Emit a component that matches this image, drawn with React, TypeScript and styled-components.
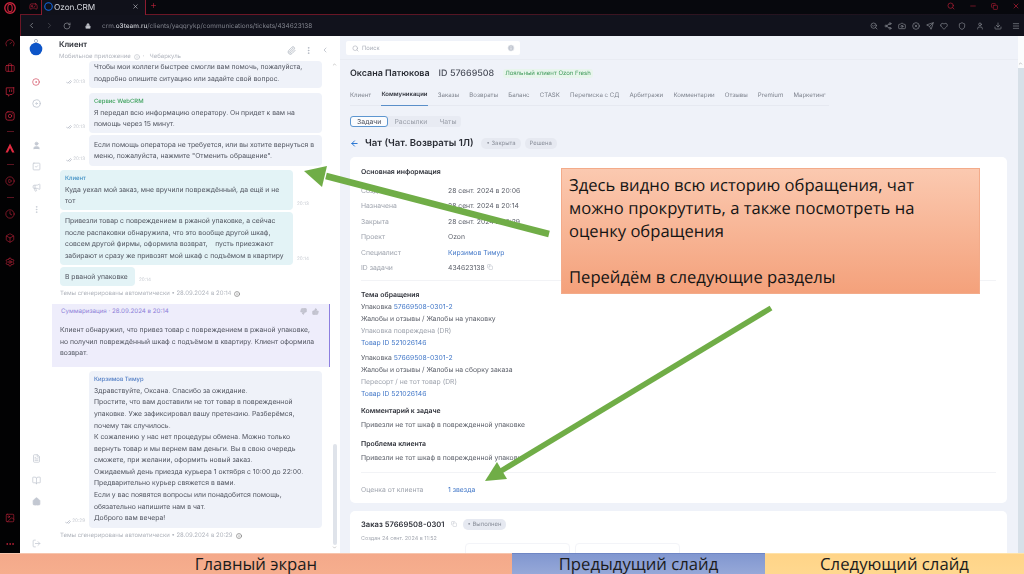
import React from "react";
import styled, { createGlobalStyle } from "styled-components";
import {
  Gauge, Briefcase, Twitch, Instagram, CirclePlay, Clock, Box, Settings, Image as ImageIcon, MoreHorizontal,
  Circle, CircleDot, Disc, User, SquareCheck, Megaphone, MoreVertical, FileText, BookOpen, Home, LogOut,
  ChevronLeft, ChevronRight, RotateCw, Lock, Paperclip, Search, Info, Copy, ThumbsUp, ThumbsDown, CheckCheck,
  ArrowLeft, X, Plus, Minus, SearchCheck, Send, Heart, Camera, Share2, CircleX, Download, Menu, Shield, Gamepad2, ChevronUp, ChevronDown
} from "lucide-react";

const Global = createGlobalStyle`
  html, body { margin: 0; padding: 0; background: #000; }
  body { width: 1024px; height: 574px; overflow: hidden; font-family: Inter, "Noto Sans", sans-serif; text-rendering: geometricPrecision; }
  * { box-sizing: border-box; }
`;

const Page = styled.div`
  position: relative; width: 1024px; height: 574px; display: grid; grid-template-rows: 553px 21px; overflow: hidden;
`;
const Browser = styled.div`display: flex; min-height: 0; filter: blur(0.35px);`;
const SideBar = styled.nav`
  width: 20px; background: #020203; display: flex; flex-direction: column; align-items: center; color: #c8243c; flex: none;
`;
const SideIcon = styled.div<{ $top: number }>`
  margin-top: ${p => p.$top}px; height: 10px; display: flex; align-items: center; justify-content: center;
`;
const SideRule = styled.div<{ $top: number }>`
  margin-top: ${p => p.$top}px; width: 7px; height: 1px; background: #5a1420;
`;
const Main = styled.div`flex: 1; min-width: 0; display: flex; flex-direction: column;`;
const TabBar = styled.div`
  height: 14px; background: #07080d; display: flex; align-items: flex-start; color: #c8243c; position: relative; padding-left: 9px;
`;
const TabSlot = styled.div`width: 12px; height: 12px; display: flex; align-items: center;`;
const ActiveTab = styled.div`
  width: 105px; height: 15px; background: #10111a; border: 1px solid #8d1c30; border-bottom: 0; border-top: 0; display: flex; align-items: center;
  padding: 0 6px 2px 2px; gap: 1px; color: #d8dae0; font-size: 8.2px; z-index: 1;
`;
const TabClose = styled.span`margin-left: auto; display: flex; color: #c9ccd4;`;
const TabPlus = styled.span`margin: 0 0 0 4px; height: 11px; display: flex; align-items: center;`;
const WinControls = styled.div`margin-left: auto; display: flex; align-items: center; gap: 14px; height: 12px; padding-right: 4px; color: #a01c30;`;
const AddressBar = styled.div`
  height: 22px; background: #11121c; border-left: 1px solid #521522; display: flex; align-items: center; color: #8f9198; padding: 0 0 0 6px; position: relative;
  border-top: 1px solid;
  border-image: linear-gradient(90deg, #6b1626 0, #6b1626 30%, #2a1420 70%, #11121c 100%) 1;
`;
const NavGroup = styled.div`display: flex; align-items: center; gap: 9px; margin-right: 14px;`;
const Url = styled.div`font-size: 6.45px; color: #7f818b; margin-left: 11px; white-space: nowrap; b { color: #c7c9cf; font-weight: 500; }`;
const Tools = styled.div`margin-left: auto; display: flex; gap: 6px; align-items: center; padding-right: 4px; color: #8a8c94;`;
const ToolGap = styled.span`width: 4px; margin: 0 -3px;`;
const Content = styled.div`flex: 1; min-height: 0; display: flex;`;

const ChatPanel = styled.section`width: 320px; flex: none; background: #fff; display: flex;`;
const Rail = styled.div`width: 32px; flex: none; display: flex; flex-direction: column; align-items: center; color: #c3c8d2;`;
const RailItem = styled.div<{ $top: number; $color?: string }>`
  margin-top: ${p => p.$top}px; height: 12px; display: flex; align-items: center; justify-content: center; color: ${p => p.$color || "inherit"};
`;
const ChatCol = styled.div`flex: 1; min-width: 0; display: flex; flex-direction: column; position: relative;`;
const ChatHead = styled.header`height: 25px; flex: none; display: flex; align-items: center; padding: 3px 8px 0 7px;`;
const HeadText = styled.div`flex: 1;`;
const HeadTitle = styled.div`font-size: 7.8px; font-weight: 600; color: #2d3038; line-height: 11px;`;
const HeadSub = styled.div`font-size: 6px; color: #b1b5be; line-height: 9px; margin-top: 2px; display: flex; align-items: center; gap: 3px;`;
const HeadTools = styled.div`display: flex; align-items: center; gap: 8px; color: #aab0bb; padding-right: 3px;`;
const Scroll = styled.div`flex: 1; min-height: 0; overflow: hidden; display: flex; flex-direction: column; padding-right: 10px;`;
const Row = styled.div<{ $mt?: number; $client?: boolean }>`
  display: flex; align-items: flex-end; margin-top: ${p => p.$mt ?? 0}px; flex: none;
  padding-left: ${p => (p.$client ? 8 : 0)}px;
`;
const StampLeft = styled.div`
  width: 37px; flex: none; font-size: 4.6px; color: #c5c9d0; display: flex; align-items: center; justify-content: flex-end; padding: 0 4px 3px 0; gap: 1px;
`;
const StampRight = styled.div`font-size: 4.6px; color: #c5c9d0; padding: 0 0 3px 4px; white-space: nowrap;`;
const Bubble = styled.div<{ $tone: "op" | "client"; $width?: number; $pad?: string }>`
  width: ${p => p.$width ?? 233}px; flex: none; border-radius: 4px;
  background: ${p => (p.$tone === "op" ? "#eff2f9" : "#e3f3f6")};
  padding: ${p => p.$pad ?? "3.5px 5px"};
  font-size: 6.8px; line-height: 11.6px; color: #50545f;
`;
const Sender = styled.div<{ $color: string }>`font-size: 5.9px; font-weight: 500; color: ${p => p.$color}; line-height: 10px;`;
const Note = styled.div<{ $mt: number }>`
  margin: ${p => p.$mt}px 0 0 8px; font-size: 6px; color: #b0b4bc; display: flex; align-items: center; gap: 3px; line-height: 8px; flex: none;
  svg { color: #555; }
`;
const Summary = styled.div`
  margin: 6px -10px 0 0; width: 278px; height: 63px; background: #eeedfb; border-right: 1.5px solid #8d7fe0; padding: 3px 10px 0 8px; flex: none;
`;
const SumHead = styled.div`display: flex; align-items: center; height: 10px; font-size: 6.2px; color: #8d7fd8; padding: 0 0 0 1px; justify-content: space-between;`;
const SumIcons = styled.div`display: flex; gap: 5px; color: #bdbdca;`;
const SumText = styled.div`font-size: 6.8px; line-height: 11.6px; color: #50545f; margin-top: 7.2px;`;
const ChatBar = styled.div`
  position: absolute; right: 3px; top: 26px; bottom: 3px; width: 5px; display: flex; flex-direction: column; align-items: center; color: #888;
`;
const ChatThumb = styled.div`width: 4px; height: 101px; background: #dfe3ea; margin-top: 377px; border-radius: 2px; margin-bottom: auto;`;

const Details = styled.section`flex: 1; min-width: 0; background: #eff2f9; display: flex; position: relative; overflow: hidden;`;
const DetailCol = styled.div`flex: 1; min-width: 0; display: flex; flex-direction: column;`;
const SearchRow = styled.div`height: 24px; flex: none; padding: 5px 0 0 6px; border-bottom: 1px solid #e9ecf3;`;
const SearchBox = styled.div`
  width: 174px; height: 14px; background: #fff; border-radius: 2px; display: flex; align-items: center; gap: 3px; padding: 0 5px 0 6px; color: #a8adb7; font-size: 5.8px;
  span:last-child { margin-left: auto; display: flex; }
`;
const Body = styled.div`flex: 1; min-height: 0; padding: 8px 11px 0 10px; display: flex; flex-direction: column;`;
const NameRow = styled.div`display: flex; align-items: center; height: 12px; gap: 9px;`;
const Name = styled.h1`margin: 0; font-size: 8.95px; font-weight: 600; color: #2a2d35; white-space: nowrap;`;
const ClientId = styled.span`font-size: 8.95px; font-weight: 500; color: #4a4e5a; white-space: nowrap;`;
const Loyal = styled.span`font-size: 6px; color: #3f9a5a; background: #e8f5ec; padding: 1px 2px; border-radius: 3px; white-space: nowrap;`;
const Tabs = styled.div`display: flex; width: 479px; height: 19px; margin-top: 8px; gap: 10.2px; font-size: 6.1px; color: #7e838e; border-bottom: 1px solid #e6e9f1; align-items: stretch;`;
const TabItem = styled.div<{ $on?: boolean }>`
  display: flex; align-items: center; height: 19px; padding-bottom: 3px; white-space: nowrap;
  font-weight: ${p => (p.$on ? 600 : 400)}; color: ${p => (p.$on ? "#33363f" : "#7e838e")};
  border-bottom: ${p => (p.$on ? "1.5px solid #5a8fc9" : "0")};
  font-size: ${p => (p.$on ? "6px" : "inherit")};
`;
const SubTabs = styled.div`display: flex; width: 111px; height: 15px; margin-top: 10px; background: #e8ebf3; border-radius: 3px; font-size: 6.9px; color: #9a9fa9;`;
const SubTab = styled.div<{ $on?: boolean }>`
  display: flex; align-items: center; padding: 0 6px; white-space: nowrap; border-radius: 3px;
  ${p => (p.$on ? "background:#fbfcfe;border:1px solid #5d96d0;color:#4a4e5a;" : "")}
`;
const TitleRow = styled.div`display: flex; align-items: center; height: 14px; margin-top: 11px; gap: 4px; color: #1f6fd0;`;
const Title = styled.h2`margin: 0 4px 0 2px; font-size: 9.6px; font-weight: 600; color: #2a2d35; white-space: nowrap;`;
const Chip = styled.span`font-size: 5.9px; color: #8a8f9a; background: #e6e9f1; padding: 2px 5px; border-radius: 5px; white-space: nowrap;`;
const Card = styled.div<{ $mt: number; $h?: number }>`
  flex: none; margin-top: ${p => p.$mt}px; height: ${p => (p.$h ? p.$h + "px" : "auto")}; background: #fff; border-radius: 5px; padding: 9px 11px 0;
`;
const MainCard = styled(Card)`padding-top: 10px;`;
const Heading = styled.h3<{ $mt?: number }>`margin: ${p => p.$mt ?? 0}px 0 0; font-size: 6.9px; line-height: 10px; font-weight: 600; color: #30333b;`;
const Info2 = styled.div`display: grid; grid-template-columns: 87px 1fr; margin-top: 6px; font-size: 6.8px; line-height: 15.4px; color: #5a5e68;`;
const Label = styled.div`color: #9ea3ad;`;
const Rule = styled.div<{ $mt: number }>`height: 1px; background: #f2f3f6; margin-top: ${p => p.$mt}px;`;
const Lines = styled.div<{ $mt?: number }>`margin-top: ${p => p.$mt ?? 0}px; font-size: 6.8px; line-height: 11.9px; color: #595d67;`;
const Link = styled.span`color: #4378c8;`;
const Muted = styled.span`color: #9ea3ad;`;
const Rate = styled.div`display: grid; grid-template-columns: 87px 1fr; margin-top: 12px; font-size: 6.8px; line-height: 10px; color: #9ea3ad;`;
const OrderRow = styled.div`display: flex; align-items: center; gap: 6px; height: 10px; margin-top: -1px; color: #c3c7cf;`;
const OrderTitle = styled.div`font-size: 7.6px; font-weight: 600; color: #30333b; white-space: nowrap;`;
const OrderDate = styled.div`font-size: 5.4px; color: #a5a9b2; margin-top: 6px; line-height: 8px;`;
const Mini = styled.div`display: flex; gap: 5px; margin: 0 0 0 104px;`;
const MiniBox = styled.div<{ $w: number }>`width: ${p => p.$w}px; height: 20px; border: 1px solid #f3f4f8; border-radius: 4px;`;
const PageBar = styled.div`width: 6px; flex: none; background: #fbfcfd; display: flex; flex-direction: column; padding-top: 25px; color: #777;`;
const PageThumb = styled.div`flex: 1; background: #d7e0e8; margin-top: 2px;`;

const Callout = styled.aside`
  position: absolute; left: 561px; top: 168px; width: 419px; height: 126px; padding: 4px 7px;
  background: linear-gradient(#fbc9b0, #f4a17b); border: 1px solid #f3ab8a;
  font-family: "Open Sans", "Noto Sans", sans-serif; font-size: 16.6px; line-height: 23px; color: #141414;
`;
const Arrows = styled.svg`position: absolute; left: 0; top: 0; width: 1024px; height: 574px; pointer-events: none;`;
const Footer = styled.footer`display: grid; grid-template-columns: 512px 253px 259px; height: 21px; overflow: hidden;`;
const FootButton = styled.div<{ $bg: string; $edge: string }>`
  background: ${p => p.$bg}; border-top: 1px solid ${p => p.$edge}; text-align: center;
  font-family: "Open Sans", "Noto Sans", sans-serif; font-size: 16.7px; line-height: 20px; color: #1c1c1c; white-space: nowrap;
`;

const LeftStamp = ({ t }: { t: string }) => (
  <StampLeft><CheckCheck size={6} color="#8b93a5" />{t}</StampLeft>
);

const Ornament = () => (
  <svg width="14" height="18" viewBox="0 0 14 18">
    <circle cx="7" cy="3" r="1.6" fill="none" stroke="#9aa3b5" strokeWidth=".8" />
    <circle cx="7" cy="11" r="6.3" fill="#0d55c8" />
  </svg>
);

const OperaMark = () => (
  <svg width="12" height="12" viewBox="0 0 12 12">
    <circle cx="6" cy="6" r="5.2" fill="none" stroke="#c8243c" strokeWidth="1.4" />
    <ellipse cx="6" cy="6" rx="2.2" ry="3.8" fill="none" stroke="#c8243c" strokeWidth="1.1" />
  </svg>
);

const App = () => (
  <Page>
    <Global />
    <Browser>
      <SideBar>
        <SideIcon $top={3}><OperaMark /></SideIcon>
        <SideIcon $top={25}><Gauge size={10} strokeWidth={1.4} /></SideIcon>
        <SideIcon $top={15}><Briefcase size={10} strokeWidth={1.6} /></SideIcon>
        <SideIcon $top={14}><Twitch size={10} strokeWidth={1.8} /></SideIcon>
        <SideIcon $top={14}><Instagram size={10} strokeWidth={1.8} /></SideIcon>
        <SideRule $top={10} />
        <SideIcon $top={11}>
          <svg width="10" height="10" viewBox="0 0 10 10"><path d="M5 .5 9.5 9.5H7.2L5 5 2.8 9.5H.5Z" fill="#e02a40" /></svg>
        </SideIcon>
        <SideRule $top={11} />
        <SideIcon $top={11}><CirclePlay size={10} strokeWidth={1.4} /></SideIcon>
        <SideRule $top={11} />
        <SideIcon $top={11}><Clock size={10} strokeWidth={1.4} /></SideIcon>
        <SideIcon $top={14}><Box size={10} strokeWidth={1.4} /></SideIcon>
        <SideIcon $top={14}><Settings size={10} strokeWidth={1.6} /></SideIcon>
        <SideIcon $top={246}><ImageIcon size={10} strokeWidth={1.4} /></SideIcon>
        <SideIcon $top={16}><MoreHorizontal size={10} strokeWidth={2} /></SideIcon>
      </SideBar>
      <Main>
        <TabBar>
          <TabSlot><Gamepad2 size={9} strokeWidth={1.6} /></TabSlot>
          <ActiveTab>
            <Circle size={9} color="#1266e0" strokeWidth={3} />Ozon.CRM
            <TabClose><X size={7} /></TabClose>
          </ActiveTab>
          <TabPlus><Plus size={7} /></TabPlus>
          <WinControls>
            <Search size={8} strokeWidth={2.4} />
            <Minus size={8} />
            <Copy size={7} strokeWidth={2.4} />
            <X size={8} strokeWidth={2.4} />
          </WinControls>
        </TabBar>
        <AddressBar>
          <NavGroup>
            <ChevronLeft size={9} />
            <ChevronRight size={9} color="#4a4b53" />
            <RotateCw size={8} />
          </NavGroup>
          <Lock size={6} fill="#c7c9cf" />
          <Url>crm.<b>o3team.ru</b>/clients/yaqqrykp/communications/tickets/434623138</Url>
          <Tools>
            <SearchCheck size={8} />
            <Share2 size={8} />
            <Camera size={8} />
            <CircleX size={8} />
            <Send size={8} />
            <Heart size={8} />
            <ToolGap />
            <Shield size={8} />
            <ToolGap />
            <User size={8} />
            <ToolGap />
            <Download size={8} />
            <ToolGap />
            <Menu size={8} />
          </Tools>
        </AddressBar>
        <Content>
          <ChatPanel>
            <Rail>
              <RailItem $top={5}><Ornament /></RailItem>
              <RailItem $top={23} $color="#d2455a"><CircleDot size={8} strokeWidth={2} /></RailItem>
              <RailItem $top={9}><Disc size={9} strokeWidth={2.4} /></RailItem>
              <RailItem $top={30}><User size={9} fill="#c3c8d2" /></RailItem>
              <RailItem $top={9}><SquareCheck size={9} /></RailItem>
              <RailItem $top={9}><Megaphone size={9} /></RailItem>
              <RailItem $top={10}><MoreVertical size={9} /></RailItem>
              <RailItem $top={237}><FileText size={9} /></RailItem>
              <RailItem $top={10}><BookOpen size={9} /></RailItem>
              <RailItem $top={9}><Home size={9} fill="#c3c8d2" /></RailItem>
              <RailItem $top={30}><LogOut size={9} /></RailItem>
            </Rail>
            <ChatCol>
              <ChatHead>
                <HeadText>
                  <HeadTitle>Клиент</HeadTitle>
                  <HeadSub>Мобильное приложение <Info size={6} /> · &nbsp;&nbsp;Чебаркуль</HeadSub>
                </HeadText>
                <HeadTools>
                  <Paperclip size={9} />
                  <MoreVertical size={9} />
                  <ChevronLeft size={8} />
                </HeadTools>
              </ChatHead>
              <Scroll>
                <Row>
                  <LeftStamp t="20:13" />
                  <Bubble $tone="op" $pad="0 5px 4px">Чтобы мои коллеги быстрее смогли вам помочь, пожалуйста, подробно опишите ситуацию или задайте свой вопрос.</Bubble>
                </Row>
                <Row $mt={5}>
                  <LeftStamp t="20:13" />
                  <Bubble $tone="op">
                    <Sender $color="#3aa05a">Сервис WebCRM</Sender>
                    Я передал всю информацию оператору. Он придет к вам на помощь через 15 минут.
                  </Bubble>
                </Row>
                <Row $mt={2}>
                  <LeftStamp t="20:13" />
                  <Bubble $tone="op">Если помощь оператора не требуется, или вы хотите вернуться в меню, пожалуйста, нажмите "Отменить обращение".</Bubble>
                </Row>
                <Row $mt={4} $client>
                  <Bubble $tone="client" $pad="4px 5px 3px 5px">
                    <Sender $color="#3f8fc4">Клиент</Sender>
                    Куда уехал мой заказ, мне вручили повреждённый, да ещё и не тот
                  </Bubble>
                  <StampRight>20:13</StampRight>
                </Row>
                <Row $mt={2} $client>
                  <Bubble $tone="client">Привезли товар с повреждением в ржаной упаковке, а сейчас после распаковки обнаружила, что это вообще другой шкаф, совсем другой фирмы, оформила возврат, &nbsp;&nbsp;&nbsp;пусть приезжают забирают и сразу же привозят мой шкаф с подъёмом в квартиру</Bubble>
                  <StampRight>20:14</StampRight>
                </Row>
                <Row $mt={2} $client>
                  <Bubble $tone="client" $width={75} $pad="3.5px 5px 4px">В рваной упаковке</Bubble>
                  <StampRight>20:14</StampRight>
                </Row>
                <Note $mt={3.5}>Темы сгенерированы автоматически • 28.09.2024 в 20:14 <Info size={6} /></Note>
                <Summary>
                  <SumHead>
                    <span>Суммаризация · 28.09.2024 в 20:14</span>
                    <SumIcons><ThumbsDown size={7} fill="#c5c6d2" /><ThumbsUp size={7} fill="#c5c6d2" /></SumIcons>
                  </SumHead>
                  <SumText>Клиент обнаружил, что привез товар с повреждением в ржаной упаковке, но получил повреждённый шкаф с подъёмом в квартиру. Клиент оформила возврат.</SumText>
                </Summary>
                <Row $mt={4}>
                  <LeftStamp t="20:29" />
                  <Bubble $tone="op" $pad="4px 5px 3.8px">
                    <Sender $color="#4f7cc4">Кирзимов Тимур</Sender>
                    Здравствуйте, Оксана. Спасибо за ожидание.<br />Простите, что вам доставили не тот товар в поврежденной упаковке. Уже зафиксировал вашу претензию. Разберёмся, почему так случилось.<br />К сожалению у нас нет процедуры обмена. Можно только вернуть товар и мы вернем вам деньги. Вы в свою очередь сможете, при желании, оформить новый заказ.<br />Ожидаемый день приезда курьера 1 октября с 10:00 до 22:00.<br />Предварительно курьер свяжется в вами.<br />Если у вас появятся вопросы или понадобится помощь, обязательно напишите нам в чат.<br />Доброго вам вечера!
                  </Bubble>
                </Row>
                <Note $mt={4}>Темы сгенерированы автоматически • 28.09.2024 в 20:29 <Info size={6} /></Note>
              </Scroll>
              <ChatBar>
                <ChevronUp size={5} />
                <ChatThumb />
                <ChevronDown size={5} />
              </ChatBar>
            </ChatCol>
          </ChatPanel>
          <Details>
            <DetailCol>
              <SearchRow>
                <SearchBox><Search size={7} />Поиск<span><Info size={8} fill="#c3c8d2" color="#fff" /></span></SearchBox>
              </SearchRow>
              <Body>
                <NameRow>
                  <Name>Оксана Патюкова</Name>
                  <ClientId>ID 57669508</ClientId>
                  <Loyal>Лояльный клиент Ozon Fresh</Loyal>
                </NameRow>
                <Tabs>
                  <TabItem>Клиент</TabItem>
                  <TabItem $on>Коммуникации</TabItem>
                  <TabItem>Заказы</TabItem>
                  <TabItem>Возвраты</TabItem>
                  <TabItem>Баланс</TabItem>
                  <TabItem>CTASK</TabItem>
                  <TabItem>Переписка с СД</TabItem>
                  <TabItem>Арбитражи</TabItem>
                  <TabItem>Комментарии</TabItem>
                  <TabItem>Отзывы</TabItem>
                  <TabItem>Premium</TabItem>
                  <TabItem>Маркетинг</TabItem>
                </Tabs>
                <SubTabs>
                  <SubTab $on>Задачи</SubTab>
                  <SubTab>Рассылки</SubTab>
                  <SubTab>Чаты</SubTab>
                </SubTabs>
                <TitleRow>
                  <ArrowLeft size={9} strokeWidth={2.5} />
                  <Title>Чат (Чат. Возвраты 1Л)</Title>
                  <Chip>• Закрыта</Chip>
                  <Chip>Решена</Chip>
                </TitleRow>
                <MainCard $mt={8} $h={346}>
                  <Heading>Основная информация</Heading>
                  <Info2>
                    <Label>Создана</Label><div>28 сент. 2024 в 20:06</div>
                    <Label>Назначена</Label><div>28 сент. 2024 в 20:14</div>
                    <Label>Закрыта</Label><div>28 сент. 2024 в 20:29</div>
                    <Label>Проект</Label><div>Ozon</div>
                    <Label>Специалист</Label><Link>Кирзимов Тимур</Link>
                    <Label>ID задачи</Label><div>434623138 <Copy size={6} color="#b5bac4" /></div>
                  </Info2>
                  <Rule $mt={5} />
                  <Heading $mt={9}>Тема обращения</Heading>
                  <Lines $mt={1}>
                    Упаковка <Link>57669508-0301-2</Link><br />
                    Жалобы и отзывы / Жалобы на упаковку<br />
                    <Muted>Упаковка повреждена (DR)</Muted><br />
                    <Link>Товар ID 521026146</Link>
                  </Lines>
                  <Lines $mt={3}>
                    Упаковка <Link>57669508-0301-2</Link><br />
                    Жалобы и отзывы / Жалобы на сборку заказа<br />
                    <Muted>Пересорт / не тот товар (DR)</Muted><br />
                    <Link>Товар ID 521026146</Link>
                  </Lines>
                  <Heading $mt={6}>Комментарий к задаче</Heading>
                  <Lines $mt={3}>Привезли не тот шкаф в поврежденной упаковке</Lines>
                  <Heading $mt={8}>Проблема клиента</Heading>
                  <Lines $mt={3}>Привезли не тот шкаф в поврежденной упаковке</Lines>
                  <Rule $mt={8} />
                  <Rate><div>Оценка от клиента</div><Link>1 звезда</Link></Rate>
                </MainCard>
                <Card $mt={8} $h={60}>
                  <OrderRow>
                    <OrderTitle>Заказ 57669508-0301</OrderTitle>
                    <Copy size={6} />
                    <Chip>• Выполнен</Chip>
                  </OrderRow>
                  <OrderDate>Создан 24 сент. 2024 в 11:52</OrderDate>
                  <Mini><MiniBox $w={105} /><MiniBox $w={105} /></Mini>
                </Card>
              </Body>
            </DetailCol>
            <PageBar>
              <ChevronUp size={5} />
              <PageThumb />
            </PageBar>
          </Details>
        </Content>
      </Main>
    </Browser>
    <Footer>
      <FootButton $bg="linear-gradient(#f4a98a,#f6ae8e)" $edge="#f7c5ad">Главный экран</FootButton>
      <FootButton $bg="linear-gradient(#8197d0,#96a8d8)" $edge="#6f86c4">Предыдущий слайд</FootButton>
      <FootButton $bg="linear-gradient(#ffd488,#ffd88f)" $edge="#ffe2a8">Следующий слайд</FootButton>
    </Footer>
    <Callout>
      Здесь видно всю историю обращения, чат<br />
      можно прокрутить, а также посмотреть на<br />
      оценку обращения<br /><br />
      Перейдём в следующие разделы
    </Callout>
    <Arrows viewBox="0 0 1024 574">
      <path d="M549 234 326 176" stroke="#70ad47" strokeWidth="6.5" fill="none" />
      <path d="M304 171 327 166 322 187Z" fill="#70ad47" />
      <path d="M771 308 501 471" stroke="#70ad47" strokeWidth="5.5" fill="none" />
      <path d="M485 481 497 462 507 479Z" fill="#70ad47" />
    </Arrows>
  </Page>
);

export default App;
